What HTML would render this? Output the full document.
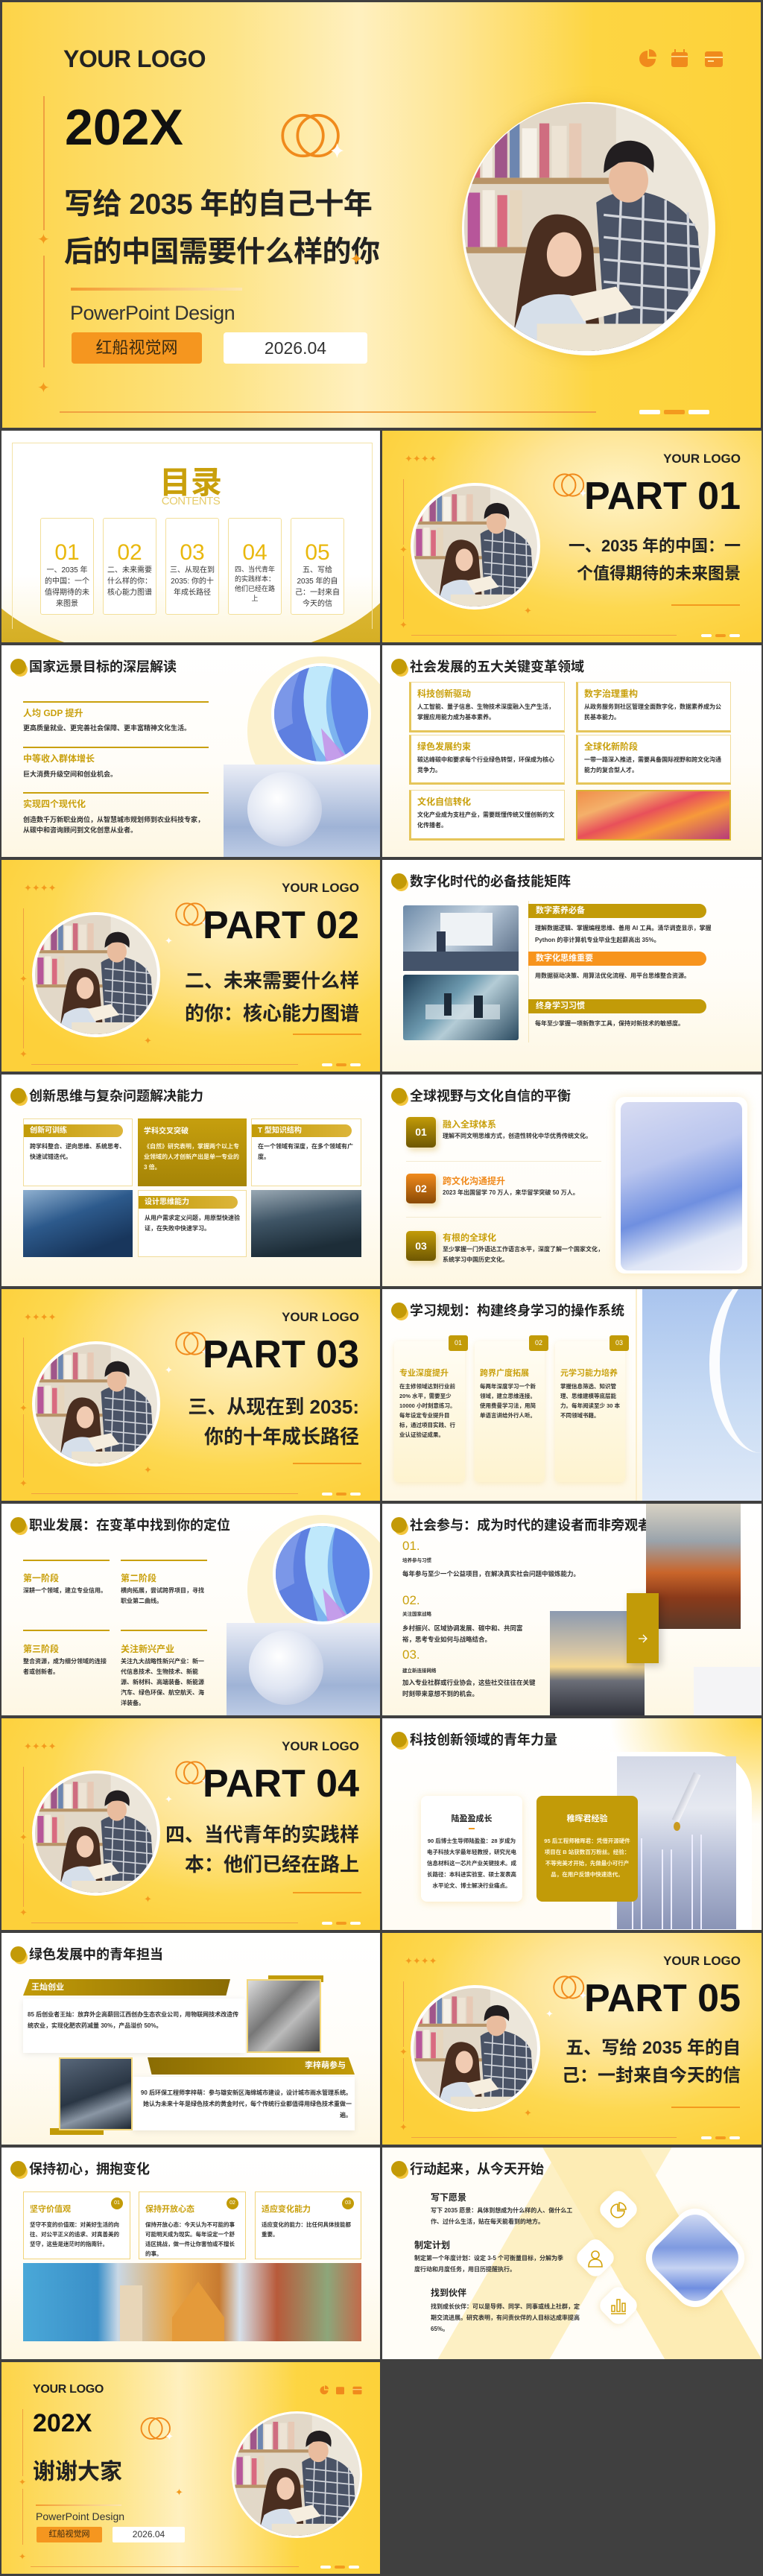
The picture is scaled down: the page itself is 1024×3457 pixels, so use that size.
<!DOCTYPE html>
<html><head><meta charset="utf-8">
<style>
*{box-sizing:border-box;margin:0;padding:0}
body{width:1024px;height:3457px;background:#404040;position:relative;overflow:hidden;font-family:"Liberation Sans","Noto Sans CJK SC",sans-serif;color:#222}
.s{position:absolute;height:284px;overflow:hidden}
.L{left:2px;width:508px}.R{left:513px;width:509px}
.a{position:absolute}
.yb{background:radial-gradient(ellipse 70% 80% at 62% 28%,#fff3c6 0%,#fee596 35%,#fdd850 70%,#fdd03a 100%)}
.wb{background:linear-gradient(180deg,#ffffff 0%,#fffdf8 55%,#fef7e3 100%)}
.hd{position:absolute;left:12px;top:18px;font-size:18px;font-weight:700;color:#222;line-height:22px;padding-left:25px;white-space:nowrap}
.hd i{position:absolute;left:0;top:0;width:21px;height:21px;border-radius:50%;background:#c39a07;box-shadow:3px 4px 0 -1px #f3c53c}
.st{position:absolute;color:#f39a1e;font-size:13px;line-height:13px}
.ph{position:absolute;border-radius:50%;overflow:hidden;background:#fff}
.gt{color:#c9a00c;font-weight:700}
.t9{font-size:9px;line-height:14px;font-weight:700;color:#333}
.dots{position:absolute;display:flex;gap:5px}
.dots b{display:block;width:14px;height:4px;border-radius:2px;background:#fff}
.dots b:nth-child(2){background:#f39a1e}
</style></head><body>

<svg width="0" height="0" style="position:absolute">
<symbol id="cp" viewBox="0 0 100 100" preserveAspectRatio="xMidYMid slice">
<rect width="100" height="100" fill="#ece6da"/>
<rect x="0" y="0" width="62" height="100" fill="#e2d8c8"/>
<rect x="2" y="8" width="5" height="22" fill="#d45a78"/><rect x="8" y="6" width="4" height="24" fill="#f4eee4"/><rect x="13" y="9" width="5" height="21" fill="#a0568a"/><rect x="19" y="7" width="4" height="23" fill="#6d86b0"/><rect x="24" y="10" width="6" height="20" fill="#f6f1e8"/><rect x="31" y="8" width="4" height="22" fill="#cf6d80"/><rect x="36" y="9" width="6" height="21" fill="#ede3d4"/><rect x="43" y="8" width="5" height="22" fill="#e7c9b5"/>
<rect x="0" y="30" width="62" height="2.5" fill="#b89468"/>
<rect x="2" y="36" width="5" height="22" fill="#b7569a"/><rect x="8" y="35" width="5" height="23" fill="#f3ece0"/><rect x="14" y="37" width="4" height="21" fill="#d96a80"/><rect x="19" y="35" width="5" height="23" fill="#e6d6be"/>
<rect x="0" y="58" width="62" height="2.5" fill="#b89468"/>
<path d="M54 40 Q62 34 74 36 Q90 40 95 52 L98 100 L58 100 Q56 72 54 40Z" fill="#4a5366"/>
<path d="M57 45 L94 49 M57 54 L96 58 M57 63 L97 67 M57 72 L98 76 M57 81 L98 85 M57 90 L98 94 M64 38 L62 100 M73 37 L72 100 M82 39 L82 100 M91 44 L92 100" stroke="#d3d6dc" stroke-width="1"/>
<ellipse cx="67" cy="31" rx="8" ry="9" fill="#e9bc9e"/>
<path d="M57 28 Q57 15 68 15 Q79 16 77 28 Q72 22 63 24 Z" fill="#221e20"/>
<path d="M26 58 Q29 43 41 45 Q53 47 53 63 L56 100 L20 100 Q22 76 26 58Z" fill="#4a2e20"/>
<ellipse cx="41" cy="61" rx="7" ry="9" fill="#f1cbb2"/>
<path d="M24 82 Q36 74 48 79 L52 100 L18 100Z" fill="#d6dfea"/>
<path d="M43 78 L62 74 L69 83 L49 88Z" fill="#f6eedf"/>
<rect x="30" y="89" width="70" height="11" fill="#ece3d0"/>
</symbol>
<symbol id="ring" viewBox="0 0 60 46"><circle cx="22" cy="23" r="19" fill="none" stroke="#f08a1c" stroke-width="2.6"/><circle cx="36" cy="23" r="19" fill="none" stroke="#f08a1c" stroke-width="2.6"/><path d="M54 30 Q55 36 60 37 Q55 38 54 44 Q53 38 48 37 Q53 36 54 30Z" fill="#fff"/></symbol>
<symbol id="glass" viewBox="0 0 100 100" preserveAspectRatio="none"><rect width="100" height="100" fill="#7db4ef"/><path d="M0 0 L55 0 Q28 40 45 100 L0 100Z" fill="#5e7fe0"/><path d="M38 0 Q18 50 58 100 L76 100 Q42 55 64 0Z" fill="#bfe8fb"/><path d="M64 0 Q52 50 80 100 L100 100 L100 0Z" fill="#5f86e6"/><path d="M50 65 Q68 85 82 100 L55 100Z" fill="#c58ae6" opacity=".8"/><path d="M0 0 L30 0 Q15 30 20 60 L0 70Z" fill="#8fa6ec" opacity=".6"/></symbol>
</svg>

<!-- COVER -->
<div class="s" style="left:3px;top:3px;width:1018px;height:571px;background:linear-gradient(90deg,#fdd448 0%,#fde488 30%,#fff0bf 47%,#fee592 60%,#fdd542 78%,#fdd23a 100%)">
 <div class="a" style="left:82px;top:58px;font-size:32px;font-weight:700;letter-spacing:-.5px">YOUR LOGO</div>
 <svg class="a" style="left:854px;top:63px" width="120" height="25" viewBox="0 0 120 25"><path d="M12 2 A11 11 0 1 0 23 13 L12 13Z" fill="#f08a1c"/><path d="M14 0 A10 10 0 0 1 24 10 L14 10Z" fill="#f08a1c"/><rect x="44" y="4" width="22" height="20" rx="3" fill="#f08a1c"/><rect x="48" y="0" width="2" height="7" fill="#f08a1c"/><rect x="60" y="0" width="2" height="7" fill="#f08a1c"/><rect x="44" y="9" width="22" height="1.5" fill="#fde7a0"/><rect x="89" y="3" width="24" height="21" rx="3" fill="#f08a1c"/><rect x="89" y="10" width="24" height="2" fill="#fde7a0"/><rect x="93" y="15" width="8" height="2" fill="#fde7a0"/></svg>
 <div class="a" style="left:55px;top:126px;width:1.5px;height:180px;background:#f0a040"></div>
 <div class="a" style="left:55px;top:340px;width:1.5px;height:150px;background:#f0a040"></div>
 <div class="st" style="left:47px;top:313px;font-size:20px">✦</div>
 <div class="st" style="left:47px;top:512px;font-size:20px">✦</div>
 <div class="a" style="left:84px;top:128px;font-size:68px;font-weight:700;line-height:80px;color:#111">202X</div>
 <svg class="a" style="left:370px;top:146px" width="90" height="66"><use href="#ring"/></svg>
 <div class="a" style="left:83px;top:240px;font-size:39px;font-weight:700;line-height:64px;color:#222;letter-spacing:-.5px">写给 2035 年的自己十年<br>后的中国需要什么样的你</div>
 <div class="st" style="left:466px;top:338px;font-size:22px">✦</div>
 <div class="a" style="left:92px;top:383px;width:230px;height:4px;background:linear-gradient(90deg,#f39a2e,#fde6b0)"></div>
 <div class="a" style="left:91px;top:402px;font-size:27px;color:#333;letter-spacing:-.5px">PowerPoint Design</div>
 <div class="a" style="left:93px;top:443px;width:175px;height:42px;background:#f5961f;border-radius:4px;font-size:22px;line-height:42px;text-align:center;color:#3a2a10">红船视觉网</div>
 <div class="a" style="left:297px;top:443px;width:193px;height:42px;background:#fff;border-radius:4px;font-size:23px;line-height:42px;text-align:center;color:#333">2026.04</div>
 <div class="ph" style="left:617px;top:134px;width:340px;height:340px;background:#fff;box-shadow:0 0 20px rgba(200,140,0,.25)"></div>
 <div class="ph" style="left:620px;top:136px;width:328px;height:332px"><svg width="328" height="332"><use href="#cp"/></svg></div>
 <div class="a" style="left:77px;top:549px;width:720px;height:1.5px;background:#f0a040"></div>
 <div class="dots" style="left:855px;top:547px"><b style="width:28px;height:6px"></b><b style="width:28px;height:6px"></b><b style="width:28px;height:6px"></b></div>
</div>

<!-- ROW1 L: 目录 -->
<div class="s L" style="top:578px;background:#fff">
 <div class="a" style="left:-60px;top:40px;width:640px;height:330px;border-radius:50%;background:linear-gradient(180deg,#f6d769,#c9a00c)"></div>
 <div class="a" style="left:-40px;top:20px;width:580px;height:290px;border-radius:50%;background:linear-gradient(180deg,#fff 60%,#fdf3d0)"></div>
 <div class="a" style="left:14px;top:16px;width:484px;height:250px;border:1.5px solid #f3e3a8;border-bottom:none"></div>
 <div class="a" style="left:0;top:48px;width:508px;text-align:center;font-size:42px;font-weight:700;color:#c9a00c;line-height:44px">目录</div>
 <div class="a" style="left:0;top:87px;width:508px;text-align:center;font-size:15px;color:#e6cc6a;line-height:16px;letter-spacing:-.5px">CONTENTS</div>
 <div class="a" style="left:52px;top:117px;display:flex;gap:12px">
  <div style="width:72px;height:130px;background:#fff;border:1.5px solid #f3df9a;border-radius:3px;text-align:center;padding-top:30px"><div style="font-size:30px;color:#e9b80e;line-height:32px">01</div><div style="font-size:10px;line-height:15px;color:#333;padding:0 4px">一、2035 年的中国：一个值得期待的未来图景</div></div>
  <div style="width:72px;height:130px;background:#fff;border:1.5px solid #f3df9a;border-radius:3px;text-align:center;padding-top:30px"><div style="font-size:30px;color:#e9b80e;line-height:32px">02</div><div style="font-size:10px;line-height:15px;color:#333;padding:0 4px">二、未来需要什么样的你：核心能力图谱</div></div>
  <div style="width:72px;height:130px;background:#fff;border:1.5px solid #f3df9a;border-radius:3px;text-align:center;padding-top:30px"><div style="font-size:30px;color:#e9b80e;line-height:32px">03</div><div style="font-size:10px;line-height:15px;color:#333;padding:0 4px">三、从现在到 2035: 你的十年成长路径</div></div>
  <div style="width:72px;height:130px;background:#fff;border:1.5px solid #f3df9a;border-radius:3px;text-align:center;padding-top:30px"><div style="font-size:30px;color:#e9b80e;line-height:32px">04</div><div style="font-size:9px;line-height:13px;color:#333;padding:0 4px">四、当代青年的实践样本：他们已经在路上</div></div>
  <div style="width:72px;height:130px;background:#fff;border:1.5px solid #f3df9a;border-radius:3px;text-align:center;padding-top:30px"><div style="font-size:30px;color:#e9b80e;line-height:32px">05</div><div style="font-size:10px;line-height:15px;color:#333;padding:0 4px">五、写给 2035 年的自己：一封来自今天的信</div></div>
 </div>
</div>

<!-- ROW1 R: PART 01 -->
<div class="s R yb" style="top:578px">
 <div class="st" style="left:30px;top:31px">✦✦✦✦</div>
 <div class="a" style="right:28px;top:28px;font-size:17px;font-weight:700">YOUR LOGO</div>
 <div class="a" style="left:28px;top:65px;width:1px;height:88px;background:#f0a040"></div>
 <div class="a" style="left:28px;top:168px;width:1px;height:85px;background:#f0a040"></div>
 <div class="st" style="left:23px;top:153px">✦</div><div class="st" style="left:23px;top:254px">✦</div>
 <div class="ph" style="left:38px;top:70px;width:174px;height:170px;border:4px solid #fff"><svg width="166" height="162"><use href="#cp"/></svg></div>
 <svg class="a" style="left:228px;top:55px" width="46" height="36"><use href="#ring"/></svg>
 <div class="a" style="right:28px;top:60px;font-size:52px;font-weight:700;line-height:56px;color:#111">PART 01</div>
 <div class="a" style="right:28px;top:136px;font-size:22px;font-weight:700;line-height:37px;text-align:right;white-space:nowrap">一、2035 年的中国：一<br>个值得期待的未来图景</div>
 <div class="st" style="left:190px;top:235px">✦</div>
 <div class="a" style="left:388px;top:233px;width:92px;height:2px;background:#f39a1e"></div>
 <div class="a" style="left:39px;top:274px;width:356px;height:1px;background:#f0a040"></div>
 <div class="dots" style="left:428px;top:273px"><b></b><b></b><b></b></div>
</div>

<!-- ROW2 L: 国家远景 -->
<div class="s L wb" style="top:866px">
 <div class="hd"><i></i>国家远景目标的深层解读</div>
 <div class="a" style="left:29px;top:75px;width:249px;height:2px;background:#c9a00c"></div>
 <div class="a gt" style="left:29px;top:82px;font-size:12px">人均 GDP 提升</div>
 <div class="a t9" style="left:29px;top:104px">更高质量就业、更完善社会保障、更丰富精神文化生活。</div>
 <div class="a" style="left:29px;top:136px;width:249px;height:2px;background:#c9a00c"></div>
 <div class="a gt" style="left:29px;top:143px;font-size:12px">中等收入群体增长</div>
 <div class="a t9" style="left:29px;top:166px">巨大消费升级空间和创业机会。</div>
 <div class="a" style="left:29px;top:197px;width:249px;height:2px;background:#c9a00c"></div>
 <div class="a gt" style="left:29px;top:204px;font-size:12px">实现四个现代化</div>
 <div class="a t9" style="left:29px;top:227px;width:250px">创造数千万新职业岗位，从智慧城市规划师到农业科技专家，从碳中和咨询顾问到文化创意从业者。</div>
 <div class="a" style="left:330px;top:15px;width:200px;height:200px;border-radius:50%;background:#fcf1cc"></div>
 <div class="a" style="left:298px;top:160px;width:230px;height:140px;background:linear-gradient(180deg,#eaedf6,#9fb3d6 60%,#c9d5ea)"></div>
 <div class="a" style="left:330px;top:170px;width:100px;height:100px;border-radius:50%;background:radial-gradient(circle at 40% 35%,#fff,#dfe5f2 50%,#aab8d6)"></div>
 <div class="ph" style="left:362px;top:24px;width:134px;height:136px;border:4px solid #fff"><svg width="126" height="128"><use href="#glass"/></svg></div>
</div>

<!-- ROW2 R: 社会发展 -->
<div class="s R wb" style="top:866px">
 <div class="hd"><i></i>社会发展的五大关键变革领域</div>
 <div class="a" style="left:36px;top:49px;width:209px;height:68px;background:#fff;border:1px solid #f1dc9a;border-left:3px solid #e5c55a;border-bottom:3px solid #e5c55a;padding:6px 8px"><div class="gt" style="font-size:12px">科技创新驱动</div><div class="t9" style="font-size:8px;margin-top:3px">人工智能、量子信息、生物技术深度融入生产生活，掌握应用能力成为基本素养。</div></div>
 <div class="a" style="left:260px;top:49px;width:208px;height:68px;background:#fff;border:1px solid #f1dc9a;border-left:3px solid #e5c55a;border-bottom:3px solid #e5c55a;padding:6px 8px"><div class="gt" style="font-size:12px">数字治理重构</div><div class="t9" style="font-size:8px;margin-top:3px">从政务服务到社区管理全面数字化，数据素养成为公民基本能力。</div></div>
 <div class="a" style="left:36px;top:120px;width:209px;height:67px;background:#fff;border:1px solid #f1dc9a;border-left:3px solid #e5c55a;border-bottom:3px solid #e5c55a;padding:6px 8px"><div class="gt" style="font-size:12px">绿色发展约束</div><div class="t9" style="font-size:8px;margin-top:3px">碳达峰碳中和要求每个行业绿色转型，环保成为核心竞争力。</div></div>
 <div class="a" style="left:260px;top:120px;width:208px;height:67px;background:#fff;border:1px solid #f1dc9a;border-left:3px solid #e5c55a;border-bottom:3px solid #e5c55a;padding:6px 8px"><div class="gt" style="font-size:12px">全球化新阶段</div><div class="t9" style="font-size:8px;margin-top:3px">一带一路深入推进，需要具备国际视野和跨文化沟通能力的复合型人才。</div></div>
 <div class="a" style="left:36px;top:194px;width:209px;height:68px;background:#fff;border:1px solid #f1dc9a;border-left:3px solid #e5c55a;border-bottom:3px solid #e5c55a;padding:6px 8px"><div class="gt" style="font-size:12px">文化自信转化</div><div class="t9" style="font-size:8px;margin-top:3px">文化产业成为支柱产业，需要既懂传统又懂创新的文化传播者。</div></div>
 <div class="a" style="left:260px;top:194px;width:208px;height:68px;border:2px solid #d9b233;background:linear-gradient(160deg,#f08e4a 0%,#f4b06a 25%,#e8505a 45%,#f79a3a 65%,#b83a7a 100%)"></div>
</div>

<!-- ROW3 L: PART 02 -->
<div class="s L yb" style="top:1154px">
 <div class="st" style="left:30px;top:31px">✦✦✦✦</div>
 <div class="a" style="right:28px;top:28px;font-size:17px;font-weight:700">YOUR LOGO</div>
 <div class="a" style="left:29px;top:65px;width:1px;height:88px;background:#f0a040"></div>
 <div class="a" style="left:29px;top:168px;width:1px;height:85px;background:#f0a040"></div>
 <div class="st" style="left:24px;top:153px">✦</div><div class="st" style="left:24px;top:254px">✦</div>
 <div class="ph" style="left:41px;top:70px;width:172px;height:168px;border:4px solid #fff"><svg width="164" height="160"><use href="#cp"/></svg></div>
 <div class="st" style="left:219px;top:102px;color:#fff">✦</div>
 <svg class="a" style="left:232px;top:55px" width="46" height="36"><use href="#ring"/></svg>
 <div class="a" style="right:28px;top:60px;font-size:52px;font-weight:700;line-height:56px;color:#111">PART 02</div>
 <div class="a" style="right:28px;top:140px;font-size:26px;font-weight:700;line-height:44px;text-align:right;white-space:nowrap">二、未来需要什么样<br>的你：核心能力图谱</div>
 <div class="st" style="left:191px;top:236px">✦</div>
 <div class="a" style="left:391px;top:233px;width:92px;height:2px;background:#f39a1e"></div>
 <div class="a" style="left:40px;top:274px;width:358px;height:1px;background:#f0a040"></div>
 <div class="dots" style="left:430px;top:273px"><b></b><b></b><b></b></div>
</div>

<!-- ROW3 R: 数字化 -->
<div class="s R wb" style="top:1154px">
 <div class="hd"><i></i>数字化时代的必备技能矩阵</div>
 <div class="a" style="left:28px;top:61px;width:155px;height:88px;border-radius:3px;background:linear-gradient(135deg,#6d8aa8,#c8d6e2 45%,#9fb1c4 60%,#4a5e78)"><div style="position:absolute;left:50px;top:10px;width:70px;height:44px;background:#eef2f5"></div><div style="position:absolute;left:45px;top:35px;width:12px;height:40px;background:#2e3a50"></div><div style="position:absolute;left:0;top:62px;width:155px;height:26px;background:#44536a"></div></div>
 <div class="a" style="left:28px;top:154px;width:155px;height:88px;border-radius:3px;background:linear-gradient(135deg,#1f3d55,#6e9bb0 40%,#b4ccd6 55%,#2a4a60)"><div style="position:absolute;left:30px;top:40px;width:100px;height:20px;background:#d7e2e8;opacity:.7"></div><div style="position:absolute;left:55px;top:25px;width:10px;height:30px;background:#1c2a38"></div><div style="position:absolute;left:95px;top:28px;width:12px;height:30px;background:#1c2a38"></div></div>
 <div class="a" style="left:196px;top:55px;width:1px;height:190px;background:#f4e4b8"></div>
 <div class="a" style="left:196px;top:59px;width:239px;height:19px;background:#c29b08;border-radius:0 10px 10px 0;color:#fff;font-size:11px;font-weight:700;line-height:19px;padding-left:10px">数字素养必备</div>
 <div class="a t9" style="left:205px;top:84px;width:260px;font-size:8px;line-height:16px">理解数据逻辑、掌握编程思维、善用 AI 工具。清华调查显示，掌握 Python 的非计算机专业毕业生起薪高出 35%。</div>
 <div class="a" style="left:196px;top:123px;width:239px;height:19px;background:#f7941d;border-radius:0 10px 10px 0;color:#fff;font-size:11px;font-weight:700;line-height:19px;padding-left:10px">数字化思维重要</div>
 <div class="a t9" style="left:205px;top:149px;font-size:8px">用数据驱动决策、用算法优化流程、用平台思维整合资源。</div>
 <div class="a" style="left:196px;top:187px;width:239px;height:19px;background:#c29b08;border-radius:0 10px 10px 0;color:#fff;font-size:11px;font-weight:700;line-height:19px;padding-left:10px">终身学习习惯</div>
 <div class="a t9" style="left:205px;top:213px;font-size:8px">每年至少掌握一项新数字工具，保持对新技术的敏感度。</div>
</div>

<!-- ROW4 L: 创新思维 -->
<div class="s L wb" style="top:1442px">
 <div class="hd"><i></i>创新思维与复杂问题解决能力</div>
 <div class="a" style="left:29px;top:59px;width:147px;height:91px;background:#fff;border:1px solid #f1dc9a"><div style="margin:7px 0 0 0;width:133px;height:17px;background:linear-gradient(90deg,#c29b08,#dcb53a);border-radius:0 9px 9px 0;color:#fff;font-size:10px;font-weight:700;line-height:17px;padding-left:8px">创新可训练</div><div class="t9" style="font-size:8px;padding:6px 8px">跨学科整合、逆向思维、系统思考、快速试错迭代。</div></div>
 <div class="a" style="left:183px;top:59px;width:146px;height:91px;background:linear-gradient(180deg,#c69f0e,#a58406);color:#fff;padding:8px"><div style="font-size:10px;font-weight:700">学科交叉突破</div><div style="font-size:8px;line-height:14px;font-weight:700;margin-top:8px;color:#fff7d8">《自然》研究表明，掌握两个以上专业领域的人才创新产出是单一专业的 3 倍。</div></div>
 <div class="a" style="left:335px;top:59px;width:148px;height:91px;background:#fff;border:1px solid #f1dc9a"><div style="margin:7px 0 0 0;width:134px;height:17px;background:linear-gradient(90deg,#c29b08,#dcb53a);border-radius:0 9px 9px 0;color:#fff;font-size:10px;font-weight:700;line-height:17px;padding-left:8px">T 型知识结构</div><div class="t9" style="font-size:8px;padding:6px 8px">在一个领域有深度，在多个领域有广度。</div></div>
 <div class="a" style="left:29px;top:155px;width:147px;height:90px;background:linear-gradient(160deg,#8fb0d0,#2d5a8c 40%,#18365c 80%)"></div>
 <div class="a" style="left:183px;top:155px;width:146px;height:90px;background:#fff;border:1px solid #f1dc9a"><div style="margin:7px 0 0 0;width:133px;height:17px;background:linear-gradient(90deg,#c29b08,#dcb53a);border-radius:0 9px 9px 0;color:#fff;font-size:10px;font-weight:700;line-height:17px;padding-left:8px">设计思维能力</div><div class="t9" style="font-size:8px;padding:6px 8px">从用户需求定义问题，用原型快速验证，在失败中快速学习。</div></div>
 <div class="a" style="left:335px;top:155px;width:148px;height:90px;background:linear-gradient(170deg,#9aa9b4,#3f5566 40%,#1d2d38 80%)"></div>
</div>

<!-- ROW4 R: 全球视野 -->
<div class="s R wb" style="top:1442px">
 <div class="hd"><i></i>全球视野与文化自信的平衡</div>
 <div class="a" style="left:32px;top:57px;width:40px;height:41px;border-radius:5px;background:linear-gradient(180deg,#c29b08,#6e5702);color:#fff;font-size:14px;font-weight:700;text-align:center;line-height:41px;box-shadow:3px 4px 8px rgba(200,150,0,.3)">01</div>
 <div class="a gt" style="left:81px;top:58px;font-size:12px">融入全球体系</div>
 <div class="a t9" style="left:81px;top:76px;font-size:8px">理解不同文明思维方式，创造性转化中华优秀传统文化。</div>
 <div class="a" style="left:32px;top:116px;width:262px;height:1px;background:#f4ead0"></div>
 <div class="a" style="left:32px;top:133px;width:40px;height:40px;border-radius:5px;background:linear-gradient(180deg,#f08a1c,#8a4a05);color:#fff;font-size:14px;font-weight:700;text-align:center;line-height:40px;box-shadow:3px 4px 8px rgba(200,150,0,.3)">02</div>
 <div class="a" style="left:81px;top:134px;font-size:12px;font-weight:700;color:#f08a1c">跨文化沟通提升</div>
 <div class="a t9" style="left:81px;top:152px;font-size:8px">2023 年出国留学 70 万人，来华留学突破 50 万人。</div>
 <div class="a" style="left:32px;top:191px;width:262px;height:1px;background:#f4ead0"></div>
 <div class="a" style="left:32px;top:210px;width:40px;height:40px;border-radius:5px;background:linear-gradient(180deg,#c29b08,#6e5702);color:#fff;font-size:14px;font-weight:700;text-align:center;line-height:40px;box-shadow:3px 4px 8px rgba(200,150,0,.3)">03</div>
 <div class="a gt" style="left:81px;top:210px;font-size:12px">有根的全球化</div>
 <div class="a t9" style="left:81px;top:228px;font-size:8px;width:220px">至少掌握一门外语达工作语言水平，深度了解一个国家文化，系统学习中国历史文化。</div>
 <div class="a" style="left:313px;top:30px;width:177px;height:237px;border-radius:12px;background:#fff;box-shadow:0 0 12px rgba(240,200,100,.3)"></div>
 <div class="a" style="left:320px;top:37px;width:163px;height:226px;border-radius:10px;background:linear-gradient(160deg,#d8dcf2 0%,#b9c5ee 35%,#6f8fe0 60%,#dfe6f6 80%,#f2f2fa 100%)"></div>
</div>

<!-- ROW5 L: PART 03 -->
<div class="s L yb" style="top:1730px">
 <div class="st" style="left:30px;top:31px">✦✦✦✦</div>
 <div class="a" style="right:28px;top:28px;font-size:17px;font-weight:700">YOUR LOGO</div>
 <div class="a" style="left:29px;top:65px;width:1px;height:88px;background:#f0a040"></div>
 <div class="a" style="left:29px;top:168px;width:1px;height:85px;background:#f0a040"></div>
 <div class="st" style="left:24px;top:153px">✦</div><div class="st" style="left:24px;top:254px">✦</div>
 <div class="ph" style="left:41px;top:70px;width:172px;height:168px;border:4px solid #fff"><svg width="164" height="160"><use href="#cp"/></svg></div>
 <div class="st" style="left:219px;top:102px;color:#fff">✦</div>
 <svg class="a" style="left:232px;top:55px" width="46" height="36"><use href="#ring"/></svg>
 <div class="a" style="right:28px;top:60px;font-size:52px;font-weight:700;line-height:56px;color:#111">PART 03</div>
 <div class="a" style="right:28px;top:138px;font-size:26px;font-weight:700;line-height:40px;text-align:right;white-space:nowrap">三、从现在到 2035:<br>你的十年成长路径</div>
 <div class="st" style="left:191px;top:236px">✦</div>
 <div class="a" style="left:391px;top:233px;width:92px;height:2px;background:#f39a1e"></div>
 <div class="a" style="left:40px;top:274px;width:358px;height:1px;background:#f0a040"></div>
 <div class="dots" style="left:430px;top:273px"><b></b><b></b><b></b></div>
</div>

<!-- ROW5 R: 学习规划 -->
<div class="s R wb" style="top:1730px">
 <div class="hd"><i></i>学习规划：构建终身学习的操作系统</div>
 <div class="a" style="left:16px;top:70px;width:95px;height:189px;border-radius:6px;background:linear-gradient(180deg,#fffdf5,#fef3cf);box-shadow:0 2px 8px rgba(240,210,120,.35);padding:34px 7px 0"><div class="gt" style="font-size:11px">专业深度提升</div><div class="t9" style="font-size:7.5px;line-height:13px;margin-top:4px">在主修领域达到行业前 20% 水平，需要至少 10000 小时刻意练习。每年设定专业提升目标，通过项目实践、行业认证验证成果。</div></div>
 <div class="a" style="left:124px;top:70px;width:94px;height:189px;border-radius:6px;background:linear-gradient(180deg,#fffdf5,#fef3cf);box-shadow:0 2px 8px rgba(240,210,120,.35);padding:34px 7px 0"><div class="gt" style="font-size:11px">跨界广度拓展</div><div class="t9" style="font-size:7.5px;line-height:13px;margin-top:4px">每两年深度学习一个新领域，建立思维连接。使用费曼学习法，用简单语言讲给外行人听。</div></div>
 <div class="a" style="left:232px;top:70px;width:94px;height:189px;border-radius:6px;background:linear-gradient(180deg,#fffdf5,#fef3cf);box-shadow:0 2px 8px rgba(240,210,120,.35);padding:34px 7px 0"><div class="gt" style="font-size:11px">元学习能力培养</div><div class="t9" style="font-size:7.5px;line-height:13px;margin-top:4px">掌握信息筛选、知识管理、思维建模等底层能力。每年阅读至少 30 本不同领域书籍。</div></div>
 <div class="a" style="left:89px;top:62px;width:26px;height:21px;background:#c29b08;border-radius:3px;color:#fff;font-size:9px;text-align:center;line-height:21px">01</div>
 <div class="a" style="left:197px;top:62px;width:26px;height:21px;background:#c29b08;border-radius:3px;color:#fff;font-size:9px;text-align:center;line-height:21px">02</div>
 <div class="a" style="left:305px;top:62px;width:26px;height:21px;background:#c29b08;border-radius:3px;color:#fff;font-size:9px;text-align:center;line-height:21px">03</div>
 <div class="a" style="left:340px;top:0;width:2px;height:284px;background:#fbeecb"></div>
 <div class="a" style="left:349px;top:0;width:160px;height:284px;background:linear-gradient(180deg,#a9c4ee 0%,#c9dcf4 55%,#dfe9f7 100%)"><div style="position:absolute;left:90px;top:-20px;width:140px;height:240px;border-radius:50%;border-left:14px solid #fff;opacity:.95"></div></div>
</div>

<!-- ROW6 L: 职业发展 -->
<div class="s L wb" style="top:2018px">
 <div class="hd"><i></i>职业发展：在变革中找到你的定位</div>
 <div class="a" style="left:29px;top:75px;width:116px;height:2px;background:#c9a00c"></div>
 <div class="a" style="left:160px;top:75px;width:116px;height:2px;background:#c9a00c"></div>
 <div class="a gt" style="left:29px;top:91px;font-size:12px">第一阶段</div>
 <div class="a t9" style="left:29px;top:110px;font-size:8px">深耕一个领域，建立专业信用。</div>
 <div class="a gt" style="left:160px;top:91px;font-size:12px">第二阶段</div>
 <div class="a t9" style="left:160px;top:110px;font-size:8px;width:118px">横向拓展，尝试跨界项目，寻找职业第二曲线。</div>
 <div class="a" style="left:29px;top:169px;width:116px;height:2px;background:#c9a00c"></div>
 <div class="a" style="left:160px;top:169px;width:116px;height:2px;background:#c9a00c"></div>
 <div class="a gt" style="left:29px;top:186px;font-size:12px">第三阶段</div>
 <div class="a t9" style="left:29px;top:205px;font-size:8px;width:115px">整合资源，成为细分领域的连接者或创新者。</div>
 <div class="a gt" style="left:160px;top:186px;font-size:12px">关注新兴产业</div>
 <div class="a t9" style="left:160px;top:205px;font-size:8px;width:118px">关注九大战略性新兴产业：新一代信息技术、生物技术、新能源、新材料、高端装备、新能源汽车、绿色环保、航空航天、海洋装备。</div>
 <div class="a" style="left:330px;top:15px;width:200px;height:200px;border-radius:50%;background:#fcf1cc"></div>
 <div class="a" style="left:302px;top:160px;width:230px;height:140px;background:linear-gradient(180deg,#eaedf6,#9fb3d6 60%,#c9d5ea)"></div>
 <div class="a" style="left:332px;top:170px;width:100px;height:100px;border-radius:50%;background:radial-gradient(circle at 40% 35%,#fff,#dfe5f2 50%,#aab8d6)"></div>
 <div class="ph" style="left:364px;top:26px;width:134px;height:136px;border:4px solid #fff"><svg width="126" height="128"><use href="#glass"/></svg></div>
</div>

<!-- ROW6 R: 社会参与 -->
<div class="s R wb" style="top:2018px">
 <div class="hd"><i></i>社会参与：成为时代的建设者而非旁观者</div>
 <div class="a" style="left:354px;top:0;width:127px;height:168px;background:linear-gradient(180deg,#d8d2c4 0%,#9aa3ab 30%,#c9652a 55%,#8a3a1a 75%,#5a3a2a 100%)"></div>
 <div class="a" style="left:418px;top:219px;width:91px;height:69px;background:#f4f4f6"></div>
 <div class="a" style="left:225px;top:144px;width:127px;height:144px;background:linear-gradient(180deg,#8c9ab0 0%,#d9c7a4 40%,#f6d890 52%,#6b6e78 65%,#2a2c34 100%)"></div>
 <div class="a" style="left:328px;top:120px;width:43px;height:94px;background:#c29b08;box-shadow:4px 4px 10px rgba(0,0,0,.2)"><svg style="position:absolute;left:14px;top:53px" width="16" height="16"><path d="M2 8 H13 M8 3 L13 8 L8 13" stroke="#fff" stroke-width="1.3" fill="none"/></svg></div>
 <div class="a gt" style="left:27px;top:47px;font-size:17px;font-weight:400;color:#c9a00c">01.</div>
 <div class="a t9" style="left:27px;top:70px;font-size:6.5px">培养参与习惯</div>
 <div class="a t9" style="left:27px;top:87px;font-size:8.5px">每年参与至少一个公益项目，在解决真实社会问题中锻炼能力。</div>
 <div class="a gt" style="left:27px;top:120px;font-size:17px;font-weight:400">02.</div>
 <div class="a t9" style="left:27px;top:142px;font-size:6.5px">关注国家战略</div>
 <div class="a t9" style="left:27px;top:160px;font-size:8.5px;width:170px;line-height:15px">乡村振兴、区域协调发展、碳中和、共同富裕，思考专业如何与战略结合。</div>
 <div class="a gt" style="left:27px;top:193px;font-size:17px;font-weight:400">03.</div>
 <div class="a t9" style="left:27px;top:218px;font-size:6.5px">建立新连接网络</div>
 <div class="a t9" style="left:27px;top:233px;font-size:8.5px;width:185px;line-height:15px">加入专业社群或行业协会，这些社交往往在关键时刻带来意想不到的机会。</div>
</div>

<!-- ROW7 L: PART 04 -->
<div class="s L yb" style="top:2306px">
 <div class="st" style="left:30px;top:31px">✦✦✦✦</div>
 <div class="a" style="right:28px;top:28px;font-size:17px;font-weight:700">YOUR LOGO</div>
 <div class="a" style="left:29px;top:65px;width:1px;height:88px;background:#f0a040"></div>
 <div class="a" style="left:29px;top:168px;width:1px;height:85px;background:#f0a040"></div>
 <div class="st" style="left:24px;top:153px">✦</div><div class="st" style="left:24px;top:254px">✦</div>
 <div class="ph" style="left:41px;top:70px;width:172px;height:168px;border:4px solid #fff"><svg width="164" height="160"><use href="#cp"/></svg></div>
 <div class="st" style="left:219px;top:102px;color:#fff">✦</div>
 <svg class="a" style="left:232px;top:55px" width="46" height="36"><use href="#ring"/></svg>
 <div class="a" style="right:28px;top:60px;font-size:52px;font-weight:700;line-height:56px;color:#111">PART 04</div>
 <div class="a" style="right:28px;top:136px;font-size:26px;font-weight:700;line-height:40px;text-align:right;white-space:nowrap">四、当代青年的实践样<br>本：他们已经在路上</div>
 <div class="st" style="left:191px;top:236px">✦</div>
 <div class="a" style="left:391px;top:233px;width:92px;height:2px;background:#f39a1e"></div>
 <div class="a" style="left:40px;top:274px;width:358px;height:1px;background:#f0a040"></div>
 <div class="dots" style="left:430px;top:273px"><b></b><b></b><b></b></div>
</div>

<!-- ROW7 R: 科技创新 -->
<div class="s R" style="top:2306px;background:radial-gradient(ellipse 40% 50% at 100% 0%,#fdd648 0%,#fee89a 50%,rgba(255,255,255,0) 100%),linear-gradient(180deg,#fff,#fffcf4)">
 <div class="hd"><i></i>科技创新领域的青年力量</div>
 <div class="a" style="left:306px;top:45px;width:190px;height:245px;border-radius:0 60px 0 0;background:#fff"></div>
 <div class="a" style="left:315px;top:51px;width:160px;height:232px;background:linear-gradient(180deg,#d3d8e6 0%,#e6e9f1 30%,#b8c0d8 60%,#8a94b6 100%)"><div style="position:absolute;left:20px;top:110px;width:14px;height:130px;border:2px solid #eef;border-top:none;border-radius:0 0 7px 7px"></div><div style="position:absolute;left:60px;top:125px;width:14px;height:120px;border:2px solid #eef;border-top:none"></div><div style="position:absolute;left:100px;top:105px;width:14px;height:140px;border:2px solid #eef;border-top:none"></div><div style="position:absolute;left:88px;top:20px;width:10px;height:70px;background:linear-gradient(90deg,#c8ccd8,#f4f4f8);transform:rotate(25deg)"></div><div style="position:absolute;left:76px;top:88px;width:9px;height:12px;border-radius:50%;background:#c99a20"></div></div>
 <div class="a" style="left:52px;top:104px;width:136px;height:142px;border-radius:8px;background:#fff;box-shadow:0 2px 10px rgba(240,200,100,.35);text-align:center;padding:22px 8px 0"><div style="font-size:11px;font-weight:700">陆盈盈成长</div><div style="width:8px;height:2px;background:#f39a1e;margin:5px auto 8px"></div><div class="t9" style="font-size:7.5px;line-height:15px">90 后博士生导师陆盈盈：28 岁成为电子科技大学最年轻教授，研究光电信息材料这一芯片产业关键技术。成长路径：本科进实验室、硕士发表高水平论文、博士解决行业痛点。</div></div>
 <div class="a" style="left:207px;top:104px;width:136px;height:142px;border-radius:8px;background:#c29b08;text-align:center;padding:22px 8px 0;color:#fff"><div style="font-size:11px;font-weight:700">稚晖君经验</div><div style="font-size:7.5px;line-height:15px;font-weight:700;margin-top:15px;color:#fff6d6">95 后工程师稚晖君：凭借开源硬件项目在 B 站获数百万粉丝。经验：不等完美才开始，先做最小可行产品，在用户反馈中快速迭代。</div></div>
</div>

<!-- ROW8 L: 绿色发展 -->
<div class="s L wb" style="top:2594px">
 <div class="hd"><i></i>绿色发展中的青年担当</div>
 <div class="a" style="left:29px;top:88px;width:298px;height:73px;background:#fff;box-shadow:0 2px 8px rgba(0,0,0,.08)"></div>
 <div class="a" style="left:29px;top:62px;width:278px;height:22px;background:linear-gradient(90deg,#c29b08,#8a6c03);clip-path:polygon(3% 0,100% 0,98% 100%,0 100%);color:#fff;font-size:11px;font-weight:700;line-height:22px;padding-left:11px">王灿创业</div>
 <div class="a t9" style="left:35px;top:102px;width:285px;font-size:8px;line-height:15px">85 后创业者王灿：放弃外企高薪回江西创办生态农业公司，用物联网技术改造传统农业，实现化肥农药减量 30%，产品溢价 50%。</div>
 <div class="a" style="left:358px;top:57px;width:74px;height:9px;background:#c29b08"></div>
 <div class="a" style="left:329px;top:62px;width:100px;height:99px;border:2px solid #f3d77a;background:linear-gradient(135deg,#ddd,#777 40%,#bbb 60%,#444)"></div>
 <div class="a" style="left:65px;top:262px;width:72px;height:9px;background:#c29b08"></div>
 <div class="a" style="left:77px;top:167px;width:99px;height:98px;border:2px solid #f3d77a;background:linear-gradient(160deg,#58677a,#2a3644 50%,#8a96a4 70%,#1e2834)"></div>
 <div class="a" style="left:176px;top:193px;width:298px;height:72px;background:#fff;box-shadow:0 2px 8px rgba(0,0,0,.08)"></div>
 <div class="a" style="left:196px;top:167px;width:278px;height:23px;background:linear-gradient(90deg,#8a6c03,#c29b08);clip-path:polygon(0 0,97% 0,100% 100%,2% 100%);color:#fff;font-size:11px;font-weight:700;line-height:23px;text-align:right;padding-right:12px">李梓萌参与</div>
 <div class="a t9" style="left:180px;top:207px;width:290px;font-size:8px;line-height:15px;text-align:right">90 后环保工程师李梓萌：参与雄安新区海绵城市建设，设计城市雨水管理系统。她认为未来十年是绿色技术的黄金时代，每个传统行业都值得用绿色技术重做一遍。</div>
</div>

<!-- ROW8 R: PART 05 -->
<div class="s R yb" style="top:2594px">
 <div class="st" style="left:30px;top:31px">✦✦✦✦</div>
 <div class="a" style="right:28px;top:28px;font-size:17px;font-weight:700">YOUR LOGO</div>
 <div class="a" style="left:28px;top:65px;width:1px;height:88px;background:#f0a040"></div>
 <div class="a" style="left:28px;top:168px;width:1px;height:85px;background:#f0a040"></div>
 <div class="st" style="left:23px;top:153px">✦</div><div class="st" style="left:23px;top:254px">✦</div>
 <div class="ph" style="left:38px;top:70px;width:174px;height:170px;border:4px solid #fff"><svg width="166" height="162"><use href="#cp"/></svg></div>
 <div class="st" style="left:219px;top:102px;color:#fff">✦</div>
 <svg class="a" style="left:228px;top:55px" width="46" height="36"><use href="#ring"/></svg>
 <div class="a" style="right:28px;top:60px;font-size:52px;font-weight:700;line-height:56px;color:#111">PART 05</div>
 <div class="a" style="right:28px;top:136px;font-size:24px;font-weight:700;line-height:37px;text-align:right;white-space:nowrap">五、写给 2035 年的自<br>己：一封来自今天的信</div>
 <div class="st" style="left:190px;top:235px">✦</div>
 <div class="a" style="left:388px;top:233px;width:92px;height:2px;background:#f39a1e"></div>
 <div class="a" style="left:39px;top:274px;width:356px;height:1px;background:#f0a040"></div>
 <div class="dots" style="left:428px;top:273px"><b></b><b></b><b></b></div>
</div>

<!-- ROW9 L: 保持初心 -->
<div class="s L wb" style="top:2882px">
 <div class="hd"><i></i>保持初心，拥抱变化</div>
 <div class="a" style="left:29px;top:59px;width:144px;height:91px;background:#fff;border:1.5px solid #f1d47a;padding:14px 8px 0"><div class="gt" style="font-size:11px">坚守价值观</div><div class="t9" style="font-size:7.5px;line-height:13px;margin-top:7px">坚守不变的价值观：对美好生活的向往、对公平正义的追求、对真善美的坚守，这些是迷茫时的指南针。</div></div>
 <div class="a" style="left:184px;top:59px;width:144px;height:91px;background:#fff;border:1.5px solid #f1d47a;padding:14px 8px 0"><div class="gt" style="font-size:11px">保持开放心态</div><div class="t9" style="font-size:7.5px;line-height:13px;margin-top:7px">保持开放心态：今天认为不可能的事可能明天成为现实。每年设定一个舒适区挑战，做一件让你害怕或不擅长的事。</div></div>
 <div class="a" style="left:340px;top:59px;width:143px;height:91px;background:#fff;border:1.5px solid #f1d47a;padding:14px 8px 0"><div class="gt" style="font-size:11px">适应变化能力</div><div class="t9" style="font-size:7.5px;line-height:13px;margin-top:7px">适应变化的能力：比任何具体技能都重要。</div></div>
 <div class="a" style="left:147px;top:67px;width:16px;height:16px;border-radius:50%;background:#c29b08;color:#fff;font-size:7px;text-align:center;line-height:16px">01</div>
 <div class="a" style="left:302px;top:67px;width:16px;height:16px;border-radius:50%;background:#c29b08;color:#fff;font-size:7px;text-align:center;line-height:16px">02</div>
 <div class="a" style="left:457px;top:67px;width:16px;height:16px;border-radius:50%;background:#c29b08;color:#fff;font-size:7px;text-align:center;line-height:16px">03</div>
 <div class="a" style="left:29px;top:155px;width:454px;height:105px;background:linear-gradient(90deg,#4aa8d8 0%,#3a8fc8 22%,#c9d8e6 28%,#e7a548 45%,#c77a30 58%,#d6e0ea 64%,#b85a3a 75%,#8da67a 90%,#c26a4a 100%)"><div style="position:absolute;left:130px;top:30px;width:30px;height:75px;background:#e8d6b8"></div><div style="position:absolute;left:200px;top:25px;width:70px;height:80px;background:#e49a3a;clip-path:polygon(50% 0,100% 60%,100% 100%,0 100%,0 60%)"></div></div>
</div>

<!-- ROW9 R: 行动起来 -->
<div class="s R" style="top:2882px;background:#fffdf7">
 <div class="a" style="left:250px;top:-20px;width:150px;height:340px;background:#fdf0c4;transform:skewX(-30deg);transform-origin:top"></div>
 <div class="a" style="left:400px;top:-20px;width:130px;height:340px;background:#fdecb4;transform:skewX(30deg);transform-origin:bottom"></div>
 <div class="hd"><i></i>行动起来，从今天开始</div>
 <div class="a" style="left:65px;top:58px;font-size:12px;font-weight:700">写下愿景</div>
 <div class="a t9" style="left:65px;top:77px;width:200px;font-size:8px;line-height:15px">写下 2035 愿景：具体到想成为什么样的人、做什么工作、过什么生活，贴在每天能看到的地方。</div>
 <div class="a" style="left:43px;top:122px;font-size:12px;font-weight:700">制定计划</div>
 <div class="a t9" style="left:43px;top:141px;width:200px;font-size:8px;line-height:15px">制定第一个年度计划：设定 3-5 个可衡量目标，分解为季度行动和月度任务，用日历提醒执行。</div>
 <div class="a" style="left:65px;top:186px;font-size:12px;font-weight:700">找到伙伴</div>
 <div class="a t9" style="left:65px;top:206px;width:205px;font-size:8px;line-height:15px">找到成长伙伴：可以是导师、同学、同事或线上社群，定期交流进展。研究表明，有问责伙伴的人目标达成率提高 65%。</div>
 <div class="a" style="left:296px;top:62px;width:42px;height:42px;border-radius:12px;background:#fff;transform:rotate(45deg);box-shadow:0 2px 8px rgba(230,190,90,.3)"></div>
 <div class="a" style="left:265px;top:127px;width:42px;height:42px;border-radius:12px;background:#fff;transform:rotate(45deg);box-shadow:0 2px 8px rgba(230,190,90,.3)"></div>
 <div class="a" style="left:296px;top:191px;width:42px;height:42px;border-radius:12px;background:#fff;transform:rotate(45deg);box-shadow:0 2px 8px rgba(230,190,90,.3)"></div>
 <svg class="a" style="left:305px;top:72px" width="24" height="24" viewBox="0 0 24 24"><path d="M11 4 A9 9 0 1 0 20 13 L11 13Z" fill="none" stroke="#d4a30a" stroke-width="1.6"/><path d="M13 2 A9 9 0 0 1 22 11 L13 11Z" fill="none" stroke="#d4a30a" stroke-width="1.6"/></svg>
 <svg class="a" style="left:275px;top:137px" width="22" height="24" viewBox="0 0 22 24"><circle cx="11" cy="7" r="5" fill="none" stroke="#d4a30a" stroke-width="1.6"/><path d="M2 23 Q2 13 11 13 Q20 13 20 23Z" fill="none" stroke="#d4a30a" stroke-width="1.6"/></svg>
 <svg class="a" style="left:306px;top:200px" width="22" height="24" viewBox="0 0 22 24"><rect x="2" y="12" width="4" height="8" fill="none" stroke="#d4a30a" stroke-width="1.5"/><rect x="9" y="4" width="4" height="16" fill="none" stroke="#d4a30a" stroke-width="1.5"/><rect x="16" y="9" width="4" height="11" fill="none" stroke="#d4a30a" stroke-width="1.5"/><path d="M1 23 H21" stroke="#d4a30a" stroke-width="1.5"/></svg>
 <div class="a" style="left:365px;top:93px;width:110px;height:110px;border-radius:28px;background:#fff;transform:rotate(45deg);box-shadow:0 2px 12px rgba(230,190,90,.35)"></div>
 <div class="a" style="left:372px;top:100px;width:96px;height:96px;border-radius:24px;transform:rotate(45deg);background:linear-gradient(135deg,#e0e6f6,#7e9ae0 40%,#c6d3f2 60%,#6f8ee0 80%,#dce4f6)"></div>
</div>

<!-- ROW10 L: 谢谢 -->
<div class="s L" style="top:3170px;background:linear-gradient(90deg,#fdd448 0%,#fde488 30%,#fff0bf 47%,#fee592 60%,#fdd542 78%,#fdd23a 100%)">
 <div class="a" style="left:42px;top:28px;font-size:16px;font-weight:700;letter-spacing:-.3px">YOUR LOGO</div>
 <svg class="a" style="left:427px;top:31px" width="60" height="13" viewBox="0 0 120 25"><path d="M12 2 A11 11 0 1 0 23 13 L12 13Z" fill="#f08a1c"/><path d="M14 0 A10 10 0 0 1 24 10 L14 10Z" fill="#f08a1c"/><rect x="44" y="4" width="22" height="20" rx="3" fill="#f08a1c"/><rect x="89" y="3" width="24" height="21" rx="3" fill="#f08a1c"/><rect x="89" y="10" width="24" height="2" fill="#fde7a0"/></svg>
 <div class="a" style="left:28px;top:63px;width:1px;height:90px;background:#f0a040"></div>
 <div class="a" style="left:28px;top:170px;width:1px;height:75px;background:#f0a040"></div>
 <div class="st" style="left:23px;top:155px;font-size:12px">✦</div><div class="st" style="left:23px;top:255px;font-size:12px">✦</div>
 <div class="a" style="left:42px;top:62px;font-size:34px;font-weight:700;line-height:40px;color:#111">202X</div>
 <svg class="a" style="left:185px;top:72px" width="45" height="34"><use href="#ring"/></svg>
 <div class="a" style="left:42px;top:128px;font-size:30px;font-weight:700;line-height:40px">谢谢大家</div>
 <div class="st" style="left:233px;top:168px">✦</div>
 <div class="a" style="left:46px;top:191px;width:115px;height:2px;background:linear-gradient(90deg,#f39a2e,#fde6b0)"></div>
 <div class="a" style="left:46px;top:199px;font-size:14px;color:#333">PowerPoint Design</div>
 <div class="a" style="left:47px;top:221px;width:88px;height:21px;background:#f5961f;border-radius:2px;font-size:11px;line-height:21px;text-align:center;color:#3a2a10">红船视觉网</div>
 <div class="a" style="left:149px;top:221px;width:97px;height:21px;background:#fff;border-radius:2px;font-size:12px;line-height:21px;text-align:center;color:#333">2026.04</div>
 <div class="ph" style="left:309px;top:66px;width:175px;height:170px;border:3px solid #fff"><svg width="169" height="164"><use href="#cp"/></svg></div>
 <div class="a" style="left:39px;top:274px;width:360px;height:1px;background:#f0a040"></div>
 <div class="dots" style="left:428px;top:273px"><b></b><b></b><b></b></div>
</div>

</body></html>
